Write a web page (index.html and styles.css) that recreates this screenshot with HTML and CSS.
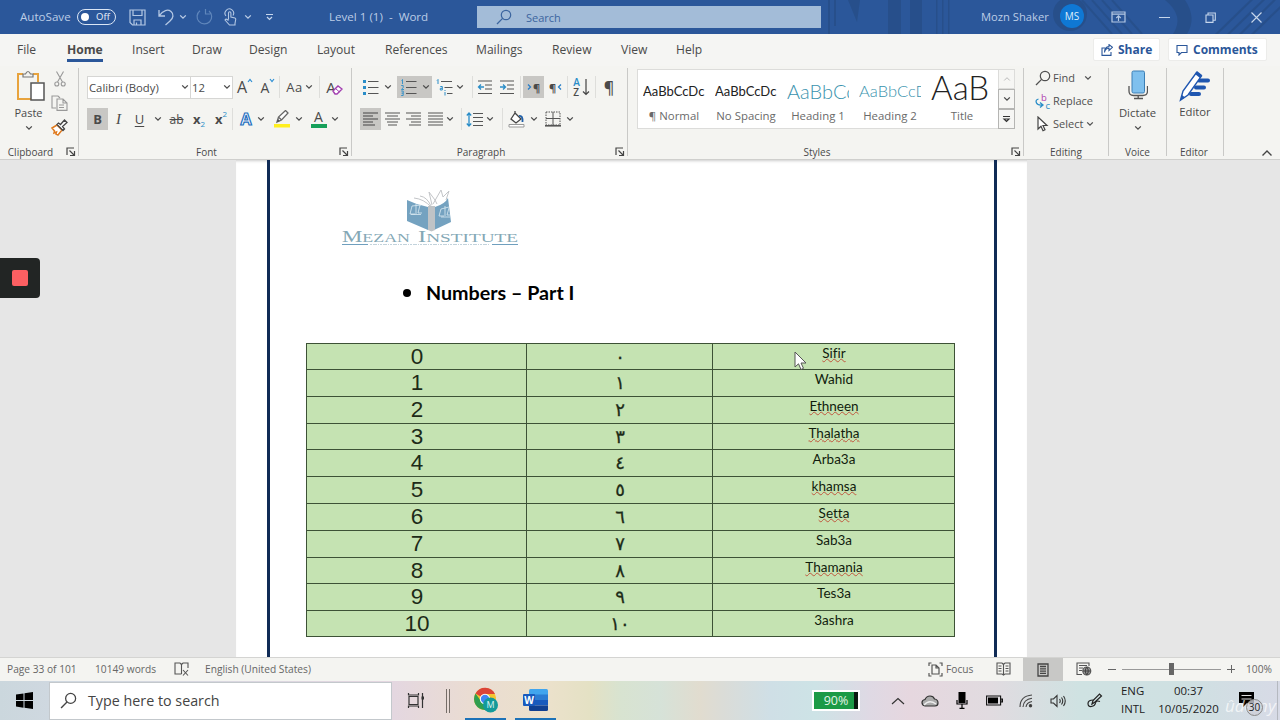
FILE: index.html
```html
<!DOCTYPE html>
<html lang="en">
<head>
    <meta charset="UTF-8">
    <meta name="viewport" content="width=device-width, initial-scale=1.0">
    <title>Level 1 (1) - Word</title>
    <link rel="stylesheet" href="styles.css">
</head>
<body>
    <svg class="defs" width="0" height="0">
        <symbol id="chev" viewBox="0 0 8 6"><path d="M1.2 1.4 4 4.2 6.8 1.4" fill="none" stroke="currentColor" stroke-width="1.3"/></symbol>
        <symbol id="launch" viewBox="0 0 10 10"><path d="M1 8V1h7M3.5 3.5 8 8M8.5 4v4.5H4" fill="none" stroke="#444" stroke-width="1.2"/></symbol>
        <symbol id="glass" viewBox="0 0 16 16"><circle cx="10" cy="6" r="4.7" fill="none" stroke="currentColor" stroke-width="1.2"/><path d="M6.6 9.4 1 15" stroke="currentColor" stroke-width="1.3"/></symbol>
    </svg>

    <header class="titlebar">
        <svg class="titlebar-art" width="460" height="34" viewBox="0 0 460 34">
            <g fill="#24487c" opacity=".5">
                <path d="M28 0h12l-3 22zM68 0h13v34H68zM90 0h12v34H90zM8 0h2v34H8zM14 0h2v26h-2zM116 0h1.500v34h-1.500zM122 0h1.500v34h-1.500zM128 0h1.500v34h-1.500z"/>
                <circle cx="250" cy="14" r="17"/>
                <path d="M395 34 430 0h3l-35 34zM407 34 442 0h3l-35 34zM419 34 453 0h3l-34 34zM431 34l29-28v3l-26 25z"/>
                <path d="M345 0h20q12 18 2 34h-14q12-18-8-34z"/>
            </g>
            <path d="m262 0 30 34M272 0l30 34M282 0l30 34M292 0l30 34" stroke="#24487c" stroke-width="2" opacity=".45"/>
        </svg>
        <span>AutoSave</span>
        <span class="toggle"><i></i>Off</span>
        <svg width="17" height="17" viewBox="0 0 17 17" fill="none" stroke="#b4c8e4" stroke-width="1.2"><path d="M1 1h15v15H3.500L1 13.500zM4 1v5.500h9V1M5 16v-5h7v5M7.500 13.500V16"/></svg>
        <svg width="16" height="18" viewBox="0 0 16 18" fill="none" stroke="#b4c8e4" stroke-width="1.3"><path d="M1 2v6h6M1.300 7.700C5 2 10 1 13 3.500S15.500 10 12 13l-4.500 4"/></svg>
        <svg class="chev" width="8" height="6"><use href="#chev"/></svg>
        <svg width="17" height="18" viewBox="0 0 17 18" fill="none" stroke="#5f86bb" stroke-width="1.2"><path d="M4 2.800A7.300 7.300 0 1 0 13 3M9.500 1v5h5"/></svg>
        <svg width="13" height="18" viewBox="0 0 13 18" fill="none" stroke="#b4c8e4" stroke-width="1.1"><path d="M2 8A4.300 4.300 0 1 1 9 7.500M4.500 11.500V5a1.200 1.200 0 0 1 2.400 0v4l4 1q1 .4.8 1.500L11 15.500V17H5.500L1 12q.8-1.500 2.200-.5l1.300 1"/></svg>
        <svg class="chev" width="8" height="6"><use href="#chev"/></svg>
        <svg width="9" height="8" viewBox="0 0 9 8" fill="none" stroke="#c6d6ec" stroke-width="1.2"><path d="M1 1.500h7M2 4l2.500 2.500L7 4"/></svg>
        <span class="doc-name">Level 1 (1) &nbsp;-&nbsp; Word</span>
        <div class="search"><svg width="16" height="16"><use href="#glass"/></svg>Search</div>
        <span class="user">Mozn Shaker</span>
        <span class="avatar">MS</span>
        <svg width="15" height="12" viewBox="0 0 15 12" fill="none" stroke="#b4c8e4" stroke-width="1.2"><path d="M1 1h13v10H1zM1 3.200h13M7.500 10V5M5.300 7l2.200-2.200L9.700 7"/></svg>
        <svg width="11" height="11" viewBox="0 0 11 11" stroke="#c6d6ec"><path d="M0 5.500h11"/></svg>
        <svg width="11" height="11" viewBox="0 0 11 11" fill="none" stroke="#c6d6ec" stroke-width="1.1"><path d="M1 3h7v7.400H1zM3 3V1h7.300v7.300H8"/></svg>
        <svg width="11" height="11" viewBox="0 0 11 11" stroke="#c6d6ec" stroke-width="1.2"><path d="m.5.5 10 10m0-10-10 10"/></svg>
    </header>

    <nav class="tabs">
        <a>File</a><a class="active">Home</a><a>Insert</a><a>Draw</a><a>Design</a><a>Layout</a><a>References</a><a>Mailings</a><a>Review</a><a>View</a><a>Help</a>
        <button class="share"><svg width="12" height="12" viewBox="0 0 12 12" fill="none" stroke="#2b579a" stroke-width="1.1"><path d="M4 4H1v7.400h9V8M3.500 8.500Q4 4.500 8 4.300V6.500l3.500-3.200L8 .6v2Q3.500 3 3.500 8.500z"/></svg>Share</button>
        <button class="comments"><svg width="12" height="12" viewBox="0 0 12 12" fill="none" stroke="#2b579a" stroke-width="1.1"><path d="M1 1.500h10v7H5.500L3 11V8.500H1z"/></svg>Comments</button>
    </nav>

    <section class="ribbon">
        <div class="group clipboard">
            <div class="body">
                <div class="paste">
                    <svg width="30" height="32" viewBox="0 0 30 32"><path d="M7 4H2v25h13M17 4h5v8" fill="none" stroke="#e8a33d" stroke-width="2"/><path d="M7 7V4h2.500q2.500-5 5 0H17v3z" fill="#f3f3f0" stroke="#777" stroke-width="1.2"/><path d="M15 13h13v17H15z" fill="#fff" stroke="#555" stroke-width="1.5"/></svg>
                    <span>Paste</span>
                    <svg class="chev" width="8" height="6"><use href="#chev"/></svg>
                </div>
                <div class="clip-tools">
                    <svg width="12" height="16" viewBox="0 0 12 16" fill="none" stroke="#999" stroke-width="1.1"><path d="m2.500.5 6 10.500M9.500.5 3.500 11"/><circle cx="2.800" cy="13" r="2"/><circle cx="9.200" cy="13" r="2"/></svg>
                    <svg width="17" height="16" viewBox="0 0 17 16" fill="none" stroke="#999" stroke-width="1.1"><path d="M5 13H1V1h6l2 2"/><path d="M6 4h6l4 4v7.400H6zM12 4v4h4M8 10h5M8 12.500h5"/></svg>
                    <svg width="17" height="17" viewBox="0 0 17 17"><path d="m1 9 5-3 5 5-4 5-2-1 .5-2L3 14l.5-2z" fill="#fff" stroke="#e07b20" stroke-width="1.5"/><path d="m6 5.500 6 6 1.500-1.500-2-2.500L16 3.500 13.500 1 9.500 5.500 7.500 4z" fill="#fff" stroke="#444" stroke-width="1.3"/></svg>
                </div>
            </div>
            <div class="label">Clipboard<svg class="launch" width="10" height="10"><use href="#launch"/></svg></div>
        </div>

        <div class="group font">
            <div class="body">
                <div class="row font-row1">
                    <div class="combo">Calibri (Body)<svg width="8" height="6"><use href="#chev"/></svg></div>
                    <div class="combo">12<svg width="8" height="6"><use href="#chev"/></svg></div>
                    <span class="btn grow">A<svg width="6" height="5" viewBox="0 0 6 5"><path d="m1 4 2-2.500L5 4" fill="none" stroke="#2a8dd4" stroke-width="1.2"/></svg></span>
                    <span class="btn grow shrink">A<svg width="6" height="5" viewBox="0 0 6 5"><path d="m1 1 2 2.500L5 1" fill="none" stroke="#2a8dd4" stroke-width="1.2"/></svg></span>
                    <span class="btn sep case">Aa<svg width="8" height="6"><use href="#chev"/></svg></span>
                    <span class="btn sep clear">A<svg width="11" height="10" viewBox="0 0 11 10"><path d="m1 6 5-5 4 3-5 5H3z" fill="#fff" stroke="#a23fb0" stroke-width="1.4"/><path d="m3.500 3.500 4 3.500" stroke="#a23fb0"/></svg></span>
                </div>
                <div class="row font-row2">
                    <span class="btn on"><b>B</b></span>
                    <span class="btn ital">I</span>
                    <span class="btn und">U</span>
                    <span class="btn"><svg width="8" height="6"><use href="#chev"/></svg></span>
                    <span class="btn strike">ab</span>
                    <span class="btn script"><b>x</b><sub>2</sub></span>
                    <span class="btn script"><b>x</b><sup>2</sup></span>
                    <span class="btn sep fx"><b>A</b><svg width="8" height="6"><use href="#chev"/></svg></span>
                    <span class="btn"><svg width="17" height="18" viewBox="0 0 17 18"><path d="M1 14h16v3.500H1z" fill="#ffef1f"/><path d="m4 12 1.500-5 7-6.500L15 3 8.500 10zM5.500 7l3 3" fill="#fff" stroke="#666" stroke-width="1.3"/><path d="m4 12 1-3 2 2z" fill="#555"/></svg><svg class="gap5" width="8" height="6"><use href="#chev"/></svg></span>
                    <span class="btn color"><b>A</b><svg width="8" height="6"><use href="#chev"/></svg></span>
                </div>
            </div>
            <div class="label">Font<svg class="launch" width="10" height="10"><use href="#launch"/></svg></div>
        </div>

        <div class="group paragraph">
            <div class="body">
                <div class="row para-row1">
                    <span class="btn"><svg width="17" height="17" viewBox="0 0 17 17"><path d="M1 1h3v3H1zM1 7h3v3H1zM1 13h3v3H1z" fill="#2a8dc8"/><path d="M6 2.500h10.500M6 8.500h10.500M6 14.500h10.500" stroke="#555" stroke-width="1.2"/></svg><svg class="gap5" width="8" height="6"><use href="#chev"/></svg></span>
                    <span class="btn on"><svg width="17" height="17" viewBox="0 0 17 17"><path d="M1.500 1.500 2.500.5V5M1.200 6.500h2v2l-1.700 2H4M1.200 12h2v4.500h-2M1.500 14.200h1.700" fill="none" stroke="#2a8dc8" stroke-width=".9"/><path d="M6 2.500h10.500M6 8.500h10.500M6 14.500h10.500" stroke="#555" stroke-width="1.2"/></svg><svg class="gap5" width="8" height="6"><use href="#chev"/></svg></span>
                    <span class="btn multi"><svg width="17" height="17" viewBox="0 0 17 17"><path d="m1 1.500 1-1V5M4.300 7.500h2V11h-2V9.300h2M9 13v3.500M9 11v1" fill="none" stroke="#2a8dc8"/><path d="M5 2.500h11M8.500 8.500h8M11 14.500h5.500" stroke="#555" stroke-width="1.2"/></svg><svg class="gap3" width="8" height="6"><use href="#chev"/></svg></span>
                    <span class="btn sep"><svg width="16" height="15" viewBox="0 0 16 15"><path d="M1 1h14M8 5h7M8 9h7M1 13.500h14" stroke="#555" stroke-width="1.2"/><path d="M7 7H1.500M4 4.500 1.500 7 4 9.500" fill="none" stroke="#2a8dc8" stroke-width="1.3"/></svg></span>
                    <span class="btn"><svg width="16" height="15" viewBox="0 0 16 15"><path d="M1 1h14M8 5h7M8 9h7M1 13.500h14" stroke="#555" stroke-width="1.2"/><path d="M1 7h5.500M4 4.500 6.500 7 4 9.500" fill="none" stroke="#2a8dc8" stroke-width="1.3"/></svg></span>
                    <span class="btn line"></span>
                    <span class="btn on pil"><svg width="5" height="8" viewBox="0 0 5 8"><path d="M1 1.500 3.500 4 1 6.500" fill="none" stroke="#2a7fc8" stroke-width="1.3"/></svg>¶</span>
                    <span class="btn pil">¶<svg width="5" height="8" viewBox="0 0 5 8"><path d="M4 1.500 1.500 4 4 6.500" fill="none" stroke="#2a7fc8" stroke-width="1.3"/></svg></span>
                    <span class="btn sep az"><span><i>A</i><i>Z</i></span><svg width="8" height="17" viewBox="0 0 8 17"><path d="M4 0v15.500M1 12.500l3 3 3-3" fill="none" stroke="#444" stroke-width="1.2"/></svg></span>
                    <span class="btn sep pilcrow">¶</span>
                </div>
                <div class="row para-row2">
                    <span class="btn on"><svg width="15" height="14" viewBox="0 0 15 14" stroke="#444" stroke-width="1.2"><path d="M0 1h15M0 4h10M0 7h15M0 10h10M0 13h12"/></svg></span>
                    <span class="btn"><svg width="15" height="14" viewBox="0 0 15 14" stroke="#555" stroke-width="1.2"><path d="M0 1h15M2 4h11M0 7h15M2 10h11M3 13h9"/></svg></span>
                    <span class="btn"><svg width="15" height="14" viewBox="0 0 15 14" stroke="#555" stroke-width="1.2"><path d="M0 1h15M5 4h10M0 7h15M5 10h10M3 13h12"/></svg></span>
                    <span class="btn justify"><svg width="15" height="14" viewBox="0 0 15 14" stroke="#555" stroke-width="1.2"><path d="M0 1h15M0 4h15M0 7h15M0 10h15M0 13h15"/></svg><svg class="gap3" width="8" height="6"><use href="#chev"/></svg></span>
                    <span class="btn sep spacing"><svg width="17" height="15" viewBox="0 0 17 15"><path d="M7 1.500h10M7 5.500h10M7 9.500h10M7 13.500h10" stroke="#555" stroke-width="1.2"/><path d="M3 1v13M.8 3.500 3 1l2.200 2.500M.8 11.500 3 14l2.200-2.500" fill="none" stroke="#2a8dc8" stroke-width="1.3"/></svg><svg class="gap3" width="8" height="6"><use href="#chev"/></svg></span>
                    <span class="btn sep"><svg width="17" height="17" viewBox="0 0 17 17"><path d="m7 2 6 6-5 4-5-4zM7 2V0" fill="#fff" stroke="#444" stroke-width="1.3"/><path d="M11 5q4-1 3.500 6" fill="none" stroke="#1f5fa8" stroke-width="1.8"/><path d="M1 13.500h15v2.500H1z" fill="#fff" stroke="#999"/></svg><svg class="gap5" width="8" height="6"><use href="#chev"/></svg></span>
                    <span class="btn"><svg width="16" height="16" viewBox="0 0 16 16" fill="none" stroke="#555"><path d="M1 1h14v13H1z" stroke-dasharray="1.500 1"/><path d="M8 1v13M1 7.500h14"/><path d="M0 14.800h16" stroke-width="1.6"/></svg><svg class="gap5" width="8" height="6"><use href="#chev"/></svg></span>
                </div>
            </div>
            <div class="label">Paragraph<svg class="launch" width="10" height="10"><use href="#launch"/></svg></div>
        </div>

        <div class="group styles">
            <div class="body">
                <div class="gallery">
                    <div class="style"><span class="sample">AaBbCcDc</span><span>¶ Normal</span></div>
                    <div class="style"><span class="sample">AaBbCcDc</span><span>No Spacing</span></div>
                    <div class="style"><span class="sample h1">AaBbCc</span><span>Heading 1</span></div>
                    <div class="style"><span class="sample h2">AaBbCcD</span><span>Heading 2</span></div>
                    <div class="style"><span class="sample title">AaB</span><span>Title</span></div>
                    <div class="scroller">
                        <span class="dim"><svg width="8" height="6" viewBox="0 0 8 6"><path d="M1.200 4.500 4 1.700 6.800 4.500" fill="none" stroke="#bbb"/></svg></span>
                        <span><svg width="8" height="6"><use href="#chev"/></svg></span>
                        <span><svg width="9" height="8" viewBox="0 0 9 8" fill="none" stroke="#333" stroke-width="1.2"><path d="M1 1.500h7M2 4l2.500 2.500L7 4z"/></svg></span>
                    </div>
                </div>
            </div>
            <div class="label">Styles<svg class="launch" width="10" height="10"><use href="#launch"/></svg></div>
        </div>

        <div class="group editing">
            <div class="body">
                <div class="edit"><svg width="16" height="16"><use href="#glass"/></svg>Find<svg class="gap9" width="8" height="6"><use href="#chev"/></svg></div>
                <div class="edit"><svg width="16" height="16" viewBox="0 0 16 16"><path d="M3.500 6Q0 7 1.500 10q1 2.500 6 2M5 9.500l3 2.500-3 2.500" fill="none" stroke="#2a8dc8" stroke-width="1.3"/><text x="6" y="8" font-size="9.500" fill="#b040b0">b</text><text x="10.500" y="15.500" font-size="9.500" fill="#2a8dc8">c</text></svg>Replace</div>
                <div class="edit"><svg width="16" height="16" viewBox="0 0 16 16"><path d="M3 1v12l3-2.800 2 4.500 2-1-2-4.200h4z" fill="#fff" stroke="#444" stroke-width="1.2"/></svg>Select<svg class="gap3" width="8" height="6"><use href="#chev"/></svg></div>
            </div>
            <div class="label">Editing</div>
        </div>

        <div class="group voice">
            <div class="body">
                <svg width="20" height="30" viewBox="0 0 20 30"><rect x="4" y="1" width="12.500" height="22" rx="1.500" fill="#7fc0ee" stroke="#3c7fb5"/><path d="M1 16v5q0 4.500 4.500 4.500h9.500q4.500 0 4.500-4.500v-5M10.200 25.500V28M6 28.500h9" fill="none" stroke="#555" stroke-width="1.3"/></svg>
                <span>Dictate</span>
                <svg width="8" height="6"><use href="#chev"/></svg>
            </div>
            <div class="label">Voice</div>
        </div>

        <div class="group editor">
            <div class="body">
                <svg width="32" height="32" viewBox="0 0 32 32"><path d="M20 10.500h9M17 17.500h8M12 24h8" stroke="#1f56b0" stroke-width="4" stroke-linecap="round"/><path d="m1.500 30 2.500-9L17.500 2.500l5 3.500L9 25z" fill="#fff" stroke="#1f56b0" stroke-width="1.4"/><path d="m1.500 30 1.500-5 3 2.500zM16 4l2-3 5 4-2 3z" fill="#1f56b0"/></svg>
                <span>Editor</span>
            </div>
            <div class="label">Editor</div>
        </div>
        <svg class="collapse" width="12" height="8" viewBox="0 0 12 8"><path d="m1.500 6.500 4.500-4.500 4.500 4.500" fill="none" stroke="#444" stroke-width="1.4"/></svg>
    </section>

    <main class="workspace">
        <div class="recorder"><i></i></div>
        <div class="page">
            <div class="frame">
                <svg class="logo" width="180" height="60" viewBox="0 0 180 60">
                    <g fill="none" stroke="#c3c5c8"><path d="M89 19Q82 11 72 10M89 18Q85 9 78 8M90 17l-3-13 6 8 2 4M91 16l8-14 2 7 6-6-3 9"/></g>
                    <path d="M65 12q10 5 21 7v23L65 33zM93 19q10-3 13-9l3 24-17 8z" fill="#74a2c0"/>
                    <path d="M86 18h7v24l-3.500 1.500L86 42z" fill="#bfc3c6"/>
                    <g fill="none" stroke="#dcebf3" stroke-width=".8"><path d="M74 16v10M70 18l9-1M70 18l-2 8h5M78 17l-2 8h4M69 26.500h10M103 18v10M99 21l8-2M99 21l-2 7h5M107 20l-2 7h3M99 29h9"/></g>
                    <g class="logo-text"><text x="0" y="54" textLength="68" lengthAdjust="spacingAndGlyphs"><tspan font-size="16">M</tspan>EZAN</text><text x="76" y="54" textLength="100" lengthAdjust="spacingAndGlyphs"><tspan font-size="16">I</tspan>NSTITUTE</text></g>
                    <path d="M0 56.500h26M150 56.500h26" stroke="#6f9fbe"/>
                    <path d="M28 56.500h120" stroke="#c3d3dc" stroke-dasharray="2 1 4 1 1 1"/>
                </svg>
                <h2><span class="dot"></span>Numbers – Part I</h2>
                <table>
                    <tr><td>0</td><td>٠</td><td><u>Sifir</u></td></tr>
                    <tr><td>1</td><td>١</td><td>Wahid</td></tr>
                    <tr><td>2</td><td>٢</td><td><u>Ethneen</u></td></tr>
                    <tr><td>3</td><td>٣</td><td><u>Thalatha</u></td></tr>
                    <tr><td>4</td><td>٤</td><td>Arba3a</td></tr>
                    <tr><td>5</td><td>٥</td><td><u>khamsa</u></td></tr>
                    <tr><td>6</td><td>٦</td><td><u>Setta</u></td></tr>
                    <tr><td>7</td><td>٧</td><td>Sab3a</td></tr>
                    <tr><td>8</td><td>٨</td><td><u>Thamania</u></td></tr>
                    <tr><td>9</td><td>٩</td><td>Tes3a</td></tr>
                    <tr><td>10</td><td>١٠</td><td>3ashra</td></tr>
                </table>
            </div>
        </div>
        <svg class="cursor" width="14" height="20" viewBox="0 0 14 20"><path d="M1 1v15l3.500-3.200L7 18.500l2.500-1.200L7 12h5z" fill="#fff" stroke="#555"/></svg>
    </main>

    <div class="statusbar">
        <span>Page 33 of 101</span>
        <span>10149 words</span>
        <svg width="15" height="14" viewBox="0 0 15 14" fill="none" stroke="#555" stroke-width="1.1"><path d="M7.500 12H1V1h5l1.500 1.500V12M7.500 2.500 9 1h5v5M9 8l5 5.500M14 8l-5 5.500"/></svg>
        <span>English (United States)</span>
        <svg width="15" height="15" viewBox="0 0 15 15" fill="none" stroke="#555" stroke-width="1.2"><path d="M4 3h4l3 3v6H4zM8 3v3h3M1 4V1h2.500M11.500 1H14v3M14 11v3h-2.500M3.500 14H1v-3"/></svg>
        <span>Focus</span>
        <svg width="15" height="14" viewBox="0 0 15 14" fill="none" stroke="#555" stroke-width="1.1"><path d="M7.500 2.500 6 1H1v11h5l1.500 1 1.500-1h5V1H9zM7.500 2.500V13M2.500 4h3M2.500 6.500h3M2.500 9h3M9.500 4h3M9.500 6.500h3M9.500 9h3"/></svg>
        <span class="view-on"><svg width="12" height="14" viewBox="0 0 12 14" fill="none" stroke="#444" stroke-width="1.3"><path d="M1 1h10v12H1zM3 3.500h6M3 5.800h6M3 8.100h6M3 10.400h6"/></svg></span>
        <svg width="16" height="14" viewBox="0 0 16 14" fill="none" stroke="#555" stroke-width="1.1"><path d="M6 12.500H1V1h12v3M3 3.500h8M3 6h4M3 8.500h3"/><circle cx="10.800" cy="9" r="4" fill="#999"/><path d="M6.800 9h8M10.800 5q-3 4 0 8M10.800 5q3 4 0 8" stroke="#444"/></svg>
        <span class="zoom"><i class="minus"></i><i class="track"><i class="thumb"></i></i><i class="plus"></i></span>
        <span>100%</span>
    </div>

    <footer class="taskbar">
        <div class="start"><svg width="17" height="17" viewBox="0 0 17 17"><path d="M0 2.500 7.500 1.400V8H0zM8.500 1.200 17 0v8H8.500zM0 9h7.500v6.700L0 14.600zM8.500 9H17v8l-8.500-1.200z"/></svg></div>
        <div class="task-search"><svg width="17" height="17" viewBox="0 0 16 16"><use href="#glass"/></svg>Type here to search</div>
        <svg class="taskview" width="18" height="17" viewBox="0 0 18 17" fill="none" stroke="#333" stroke-width="1.2"><path d="M2 4.500h9v8H2zM1.500 1v2h10V1M1.500 16v-2h10v2M15.500 1v15"/><path d="M14.500 4.500h2.500v3h-2.500z" fill="#333" stroke="none"/></svg>
        <span class="bars"></span>
        <div class="app"><svg width="26" height="26" viewBox="0 0 26 26"><circle cx="12" cy="12" r="11" fill="#f4c430"/><path d="M12 12 2.500 6.500A11 11 0 0 1 22 7H12z" fill="#dc4437"/><path d="M2.500 6.500A11 11 0 0 0 12 23l4-7-8-2z" fill="#2f9e50"/><circle cx="12" cy="12" r="5.200" fill="#fff"/><circle cx="12" cy="12" r="4.200" fill="#4285f4"/><circle cx="17.500" cy="18" r="7.500" fill="#129a9a"/><text x="17.500" y="21.200" font-size="9" text-anchor="middle" fill="#d9f4f4">M</text></svg></div>
        <div class="app"><svg width="25" height="22" viewBox="0 0 25 22"><path d="M6 1.500Q6 0 7.500 0h16Q25 0 25 1.500V6H6z" fill="#41a5ee"/><path d="M6 5.500h19V11H6z" fill="#2b7cd3"/><path d="M6 11h19v5.500H6z" fill="#185abd"/><path d="M6 16.500h19v4q0 1.500-1.500 1.500h-16Q6 22 6 20.500z" fill="#103f91"/><rect y="5" width="12" height="12" rx="1" fill="#185abd"/><text x="6" y="14.500" font-size="10" font-weight="bold" text-anchor="middle" fill="#fff">W</text></svg></div>
        <div class="charge"><span>90%</span></div>
        <div class="tray">
            <svg width="14" height="8" viewBox="0 0 14 8"><path d="m1 7 6-5.500L13 7" fill="none" stroke="#333" stroke-width="1.2"/></svg>
            <svg width="18" height="12" viewBox="0 0 18 12"><path d="M4 11q-3-.5-3-3.500Q1 5 4 4.500 5.500 1 9 1t4.500 3Q17 4.500 17 8q0 3-3 3z" fill="#aaa" stroke="#333" stroke-width="1.2"/><path d="M3 10Q8 4 15 9" fill="none" stroke="#eee" stroke-width="1.3"/></svg>
            <svg width="12" height="17" viewBox="0 0 12 17"><path d="M2.500 0h7v11h-7z"/><path d="M1 8v4h10V8M6 12v4M3.500 16.300h5" fill="none" stroke="#000" stroke-width="1.2"/></svg>
            <svg width="17" height="11" viewBox="0 0 17 11"><path d="M.6 1h14v9H.6zM15 4h1.500v3H15z" fill="none" stroke="#111" stroke-width="1.1"/><path d="M2 2.500h10v6H2z"/></svg>
            <svg width="14" height="14" viewBox="0 0 14 14" fill="none" stroke="#444" stroke-width="1.1"><path d="M1 13Q1 2 13 1M4 13Q4.500 5.500 13 4.300M7 13Q7.500 8.500 13 7.500" /><circle cx="11.500" cy="11.800" r="1.200" fill="#333"/></svg>
            <svg width="16" height="14" viewBox="0 0 16 14" fill="none" stroke="#333" stroke-width="1.1"><path d="M1 5v4h2.500L7 12.500v-11L3.500 5zM9.500 5q1.500 2 0 4M11.500 3.500q2.500 3.500 0 7M13.500 2q3.500 5 0 10"/></svg>
            <svg class="pen" width="16" height="15" viewBox="0 0 16 15" fill="none" stroke="#222" stroke-width="1.2"><path d="m5 11 1-3.500L12.500 1l2 2-6.500 6z"/><path d="M6.500 7Q1 7 1 10.500T4.500 13.500Q8 13 8.500 10T13 8.500"/></svg>
        </div>
        <div class="lang">ENG<br>INTL</div>
        <div class="clock">00:37<br>10/05/2020</div>
        <div class="notify">
            <svg width="17" height="16" viewBox="0 0 17 16"><path d="M1 0h15v11H9l-4 4v-4H1z"/><path d="M3.500 3.500h10M3.500 7h10" stroke="#ddd"/></svg>
            <span class="mark">ûdemy</span>
            <span class="count">30</span>
        </div>
    </footer>
</body>
</html>
```

FILE: styles.css
```css
* {
    box-sizing: border-box;
}
body {
    margin: 0;
    width: 1280px;
    height: 720px;
    overflow: hidden;
    font-family: "Open Sans", "Noto Sans", sans-serif;
    font-size: 11px;
    color: #4a4a4a;
    background: #e6e6e6;
}
svg {
    display: block;
    flex: none;
}
.defs {
    position: absolute;
}

/* title bar */
.titlebar {
    position: relative;
    display: grid;
    grid-template-columns: 57px 52px 29px 21px 17px 28px 20px 21px 64px 148px 504px 79px 51px 48px 46px 46px 12px;
    align-items: center;
    height: 34px;
    padding-left: 20px;
    background: #2b579a;
    color: #bccde6;
    font-size: 11.6px;
    white-space: pre;
}
.titlebar-art {
    position: absolute;
    right: 0;
    top: 0;
}
.titlebar > *:not(.titlebar-art) {
    position: relative;
}
.titlebar > span:not(.toggle) {
    margin-top: -2px;
}
.toggle {
    display: flex;
    align-items: center;
    width: 39px;
    height: 16px;
    margin-top: -1px;
    border: 1.3px solid #dbe6f5;
    border-radius: 8px;
    padding-left: 3px;
    gap: 7px;
    font-size: 9.5px;
    color: #e8f0fa;
}
.toggle i {
    width: 8px;
    height: 8px;
    border-radius: 50%;
    background: #fff;
}
.chev {
    color: currentColor;
}
.search {
    display: flex;
    align-items: center;
    gap: 14px;
    width: 344px;
    height: 22px;
    padding-left: 19px;
    background: #a3bcd8;
    color: #3c659f;
    font-size: 11px;
}
.user {
    font-size: 11.2px;
}
.avatar {
    width: 24px;
    height: 24px;
    border-radius: 50%;
    background: #0f78d4;
    color: #dcecfb;
    font-size: 10px;
    line-height: 24px;
    text-align: center;
}

/* tabs */
.tabs {
    display: grid;
    grid-template-columns: 50px 65px 60px 57px 68px 68px 91px 76px 69px 55px 417px 75px 100px;
    height: 32px;
    padding-left: 17px;
    background: #f5f5f3;
    font-size: 12.1px;
}
.tabs a {
    justify-self: start;
    height: 28px;
    line-height: 32px;
}
.tabs .active {
    font-weight: bold;
    border-bottom: 3px solid #2b579a;
}
.tabs button {
    display: flex;
    align-items: center;
    gap: 5px;
    align-self: start;
    height: 23px;
    margin-top: 4px;
    padding: 0 0 0 7px;
    border: 1px solid #ececea;
    border-radius: 2px;
    background: #fff;
    color: #2b579a;
    font: bold 12px "Open Sans", sans-serif;
}
.tabs .share {
    width: 67px;
}
.tabs .comments {
    width: 99px;
}

/* ribbon */
.ribbon {
    display: flex;
    height: 94px;
    padding-top: 2px;
    background: #f4f4f1;
    border-bottom: 1px solid #cfcfcd;
}
.group {
    display: flex;
    flex-direction: column;
    height: 88px;
    border-right: 1px solid #c9c9c7;
}
.group .body {
    flex: none;
    height: 77px;
}
.label {
    position: relative;
    flex: none;
    height: 14px;
    line-height: 14px;
    text-align: center;
    font-size: 10px;
}
.launch {
    position: absolute;
    right: 2px;
    top: 2px;
}
.clipboard { width: 79px; }
.clipboard .label { padding-right: 17px; }
.font { width: 273px; }
.font .label { padding-right: 17px; }
.paragraph { width: 276px; }
.paragraph .label { padding-right: 17px; }
.styles { width: 396px; }
.styles .label { padding-right: 17px; }
.editing { width: 85px; }
.voice { width: 58px; }
.editor { width: 57px; }
.editor .label { padding-right: 2px; }

.clipboard .body {
    display: flex;
    padding-top: 2px;
}
.paste {
    display: flex;
    flex-direction: column;
    align-items: center;
    width: 50px;
    padding-left: 7px;
    font-size: 11px;
}
.paste > svg:first-child {
    margin-left: 4px;
}
.paste > span {
    line-height: 15px;
    margin: 3px 0 5px;
}
.clip-tools {
    display: flex;
    flex-direction: column;
    align-items: center;
    gap: 8px;
    padding: 1px 0 0 1px;
}

.row {
    display: grid;
    align-items: center;
    height: 24px;
}
.font .body, .paragraph .body {
    display: flex;
    flex-direction: column;
    gap: 8px;
    padding: 7px 0 0 8px;
}
.font-row1 {
    grid-template-columns: 104px 42px 24px 22px 40px 30px;
}
.font-row2 {
    grid-template-columns: 21px 21px 21px 15px 23px 22px 22px 40px 32px 41px;
}
.paragraph .para-row1 {
    margin-left: -3px;
    grid-template-columns: 40px 35px 40px 25px 19px 7px 21px 23px 28px 26px;
}
.para-row2 {
    grid-template-columns: 21px 22px 21px 37px 41px 41px 33px;
}
.combo {
    display: flex;
    align-items: center;
    justify-content: space-between;
    height: 23px;
    padding: 0 1px;
    border: 1px solid #d6d6d4;
    background: #fff;
    font-size: 11.3px;
}
.combo + .combo {
    border-left: 0;
}
.btn {
    display: flex;
    align-items: center;
    justify-content: center;
    height: 22px;
    font-size: 13px;
}
.btn.on {
    background: #c8c7c4;
}
.btn.sep, .btn.line {
    border-left: 1px solid #dededb;
}
.btn.line {
    margin-left: 4px;
}
.multi, .justify, .spacing {
    padding-right: 4px;
}
.gap3 { margin-left: 3px; }
.gap5 { margin-left: 5px; }
.gap9 { margin-left: 9px; }
.grow {
    font-size: 16px;
}
.grow svg {
    align-self: flex-start;
    margin-top: 2px;
}
.shrink {
    font-size: 14px;
}
.case {
    gap: 2px;
    letter-spacing: .5px;
}
.clear {
    font-size: 15px;
}
.clear svg {
    margin: 5px 0 0 -4px;
}
.ital {
    font: italic 15px "Liberation Serif", serif;
}
.und {
    text-decoration: underline;
    text-underline-offset: 2px;
}
.strike {
    text-decoration: line-through;
    font-size: 12px;
}
.script sub, .script sup {
    font-size: 8px;
    line-height: 8px;
    color: #2a8dc8;
}
.script sub {
    margin-top: 10px;
}
.script sup {
    margin-bottom: 10px;
}
.fx {
    gap: 5px;
}
.fx b {
    font-size: 16px;
    color: #fff;
    -webkit-text-stroke: 1.2px #1f6fbf;
}
.color {
    gap: 4px;
}
.color b {
    width: 16px;
    height: 18px;
    border-bottom: 4px solid #16a05a;
    font-weight: normal;
    font-size: 14px;
    line-height: 14px;
    text-align: center;
}
.pil {
    font-size: 11px;
    font-weight: bold;
    gap: 1px;
}
.az {
    gap: 2px;
}
.az i {
    display: block;
    height: 10px;
    font-size: 10px;
    line-height: 10px;
    font-weight: 600;
    font-style: normal;
}
.az i:first-child {
    color: #2a8dc8;
}
.pilcrow {
    font-size: 16px;
    font-weight: 600;
    padding-left: 1px;
}

.styles .body {
    padding: 1px 0 0 9px;
}
.gallery {
    display: grid;
    grid-template-columns: repeat(5, 72px) 17px;
    width: 377px;
    height: 60px;
    border: 1px solid #dcdcda;
    background: #fff;
}
.style {
    padding: 0 5px;
    text-align: center;
    font-size: 11.4px;
    line-height: 14px;
    color: #6a6a6a;
    overflow: hidden;
}
.style span {
    display: block;
    white-space: nowrap;
}
.style .sample {
    height: 39px;
    line-height: 43px;
    overflow: hidden;
    font-family: Lato, sans-serif;
    font-size: 13px;
    color: #222;
    text-align: left;
}
.style .h1 {
    font-size: 20px;
    font-weight: 300;
    color: #3a93ae;
}
.style .h2 {
    font-size: 16.5px;
    font-weight: 300;
    color: #3a93ae;
}
.style .title {
    font-size: 33px;
    font-weight: 300;
    line-height: 35px;
}
.scroller {
    display: grid;
    grid-template-rows: 20px 20px 20px;
    margin-top: -1px;
}
.scroller span {
    display: flex;
    align-items: center;
    justify-content: center;
    border: 1px solid #b5b5b3;
    background: #f6f6f4;
}
.scroller .dim {
    border-color: #dcdcda;
}

.editing .body {
    margin: -2px 0 2px;
    padding-left: 11px;
    color: #505050;
}
.edit {
    display: flex;
    align-items: center;
    height: 23px;
    font-size: 11px;
}
.edit > svg:first-child {
    margin-right: 2px;
}
.voice .body, .editor .body {
    display: flex;
    flex-direction: column;
    align-items: center;
    padding-top: 2px;
    font-size: 11.3px;
}
.voice span, .editor span {
    line-height: 15px;
    margin: 5px 0 5px;
}
.editor span {
    margin-top: 2px;
}
.collapse {
    margin: 81px 0 0 37px;
}

/* document */
.workspace {
    position: relative;
    height: 497px;
    padding-left: 236px;
    background: #e6e6e6;
}
.page {
    width: 791px;
    height: 497px;
    padding: 0 30px 0 31px;
    background: #fff;
    box-shadow: inset 0 3px 3px -2px #ccc;
}
.frame {
    height: 497px;
    padding: 28px 0 0 36px;
    border-left: 3px solid #102b56;
    border-right: 3px solid #102b56;
}
.logo {
    margin-left: 36px;
}
.logo-text {
    font-family: "Liberation Serif", serif;
    font-size: 12.5px;
    fill: #84a8b6;
}
h2 {
    display: flex;
    align-items: center;
    gap: 15px;
    height: 24px;
    margin: 32px 0 39px 97px;
    font: bold 19.7px Lato, sans-serif;
    color: #000;
}
.dot {
    width: 8px;
    height: 8px;
    margin-top: 2px;
    border-radius: 50%;
    background: #000;
}
table {
    width: 649px;
    table-layout: fixed;
    border-collapse: collapse;
    background: #c5e3b2;
    color: #1d2b18;
}
tr {
    height: 27px;
}
tr:nth-child(1), tr:nth-child(4), tr:nth-child(9), tr:nth-child(11) {
    height: 26px;
}
td {
    padding: 0 0 0 1px;
    border: 1px solid #3d5236;
    text-align: center;
}
td:nth-child(1) {
    width: 220px;
    font: 22.5px/24px "Liberation Sans", Arial, sans-serif;
}
td:nth-child(2) {
    width: 186px;
    font: 18px/20px "DejaVu Sans", sans-serif;
    -webkit-text-stroke: .3px #1d2b18;
}
td:nth-child(3) {
    vertical-align: top;
    font: 13.5px/19px Lato, sans-serif;
    font-variant-ligatures: none;
    color: #111c0d;
}
td u {
    text-decoration: underline wavy #c0583f 1px;
    text-underline-offset: 0;
}
.recorder {
    position: absolute;
    left: 0;
    top: 98px;
    width: 40px;
    height: 40px;
    border-radius: 0 4px 4px 0;
    background: #222524;
}
.recorder i {
    display: block;
    width: 16px;
    height: 16px;
    margin: 12px;
    border-radius: 2px;
    background: #fc5f62;
}
.cursor {
    position: absolute;
    left: 794px;
    top: 191px;
}

/* status bar */
.statusbar {
    display: grid;
    grid-template-columns: 88px 79px 31px 723px 18px 50px 27px 53px 32px 138px 40px;
    align-items: center;
    height: 24px;
    padding-left: 7px;
    border-top: 1px solid #d4d4d2;
    background: #f4f4f1;
    font-size: 10.2px;
    color: #666;
}
.statusbar > span:not(.view-on):not(.zoom) {
    margin-top: -2px;
}
.statusbar > svg, .zoom {
    margin-top: -1px;
}
.view-on {
    display: flex;
    align-items: center;
    justify-content: center;
    width: 40px;
    height: 23px;
    background: #c8c8c6;
}
.zoom {
    display: flex;
    align-items: center;
    gap: 6px;
}
.minus, .plus {
    width: 8px;
    height: 1px;
    background: #666;
}
.plus {
    height: 8px;
    background: linear-gradient(#666, #666) center / 8px 1px no-repeat, linear-gradient(#666, #666) center / 1px 8px no-repeat;
}
.track {
    display: flex;
    align-items: center;
    justify-content: center;
    width: 99px;
    height: 1px;
    background: #999;
}
.thumb {
    width: 5px;
    height: 12px;
    background: #666;
}

/* taskbar */
.taskbar {
    display: flex;
    align-items: center;
    height: 39px;
    background: linear-gradient(90deg, #cbd7dd 0, #cfd8e0 50px, #e4d7e0 395px, #eadcd2 470px, #ebe1cb 550px, #e4e1c4 590px, #d8e3d0 620px, #d6e2d8 660px, #e1dccf 700px, #dadcd8 725px, #cfdfe6 770px, #cde3e6 815px, #dfd9e4 870px, #e6d7df 910px, #e1dbe0 990px, #cfe2e2 1080px, #cfe0e2 1190px, #d7dae6 1280px);
    color: #222;
}
.start {
    width: 49px;
    padding-left: 16px;
}
.task-search {
    display: flex;
    align-items: center;
    gap: 11px;
    width: 343px;
    height: 38px;
    padding-left: 10px;
    border: 1px solid #c3c8cc;
    background: #fff;
    font-size: 14.3px;
    color: #444;
}
.taskview {
    margin-left: 15px;
}
.bars {
    width: 4px;
    height: 24px;
    margin: 0 15px 0 21px;
    border-left: 1px solid #756d68;
    border-right: 1px solid #756d68;
}
.app {
    display: flex;
    align-items: center;
    justify-content: center;
    width: 41px;
    height: 39px;
    margin-right: 9px;
    border-bottom: 2px solid #1c72b8;
}
.charge {
    width: 48px;
    height: 21px;
    margin-left: 247px;
    padding: 2px;
    background: #fff;
}
.charge span {
    display: block;
    width: 44px;
    height: 17px;
    padding-left: 4px;
    border-right: 4px solid #0a1a10;
    background: #1b9a46;
    color: #e4f5e8;
    font-size: 12.5px;
    line-height: 17px;
    text-align: center;
}
.tray {
    display: grid;
    grid-template-columns: repeat(6, 32px) 41px;
    justify-items: center;
    align-items: center;
    margin-left: 22px;
}
.lang, .clock {
    margin-top: -1px;
    font-size: 11.4px;
    line-height: 18px;
}
.lang {
    width: 36px;
    margin-left: 6px;
}
.clock {
    width: 63px;
    text-align: center;
}
.notify {
    position: relative;
    width: 55px;
    height: 39px;
    margin-left: 3px;
    padding: 11px 0 0 15px;
    border-right: 1px solid #b5b9c0;
}
.mark {
    position: absolute;
    left: 2px;
    top: 13px;
    font-size: 17px;
    font-style: italic;
    color: rgba(255, 255, 255, .7);
}
.count {
    position: absolute;
    left: 23px;
    top: 18px;
    width: 17px;
    height: 17px;
    border: 1px solid #888;
    border-radius: 50%;
    background: rgba(205, 208, 216, .8);
    font-size: 10px;
    line-height: 15px;
    text-align: center;
}
```
